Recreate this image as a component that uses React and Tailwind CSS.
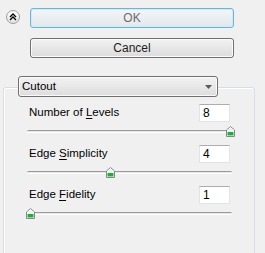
import React from 'react';

// Slider rows: value, thumb center (px from track start)
const ROWS = [
  { id: 'levels', before: 'Number of ', key: 'L', after: 'evels', value: '8', thumb: 203 },
  { id: 'simplicity', before: 'Edge ', key: 'S', after: 'implicity', value: '4', thumb: 83 },
  { id: 'fidelity', before: 'Edge ', key: 'F', after: 'idelity', value: '1', thumb: 3 },
];

const Thumb = ({ left }) => (
  <svg
    width="9"
    height="11"
    viewBox="0 0 9 11"
    className="absolute top-0"
    style={{ left: left - 4.5 }}
  >
    <path d="M4.5 0.5 L8.5 4 L8.5 10.5 L0.5 10.5 L0.5 4 Z" fill="#ffffff" stroke="#7d8a94" />
    <path d="M1.5 6 L7.5 6 L7.5 9.5 L1.5 9.5 Z" fill="#22b02c" />
    <path d="M4.5 2 L7 4.3 L7 6 L2 6 L2 4.3 Z" fill="#e9f1f4" />
  </svg>
);

const SliderRow = ({ row }) => (
  <div className="flex flex-col">
    <div className="flex items-center justify-between h-[18px] pl-[25px] pr-[24px]">
      <span className="text-[11.5px] text-black leading-none">
        {row.before}
        <span className="underline underline-offset-2">{row.key}</span>
        {row.after}
      </span>
      <div className="w-[31px] h-[18px] bg-white border border-[#e2e3ea] border-t-[#abadb3] flex items-center pl-[3px] text-[12px] text-black">
        {row.value}
      </div>
    </div>
    <div className="relative ml-[23px] w-[205px] h-[11px] mt-[4px]">
      <div className="absolute left-0 right-0 top-[4px] h-[3px] rounded-full border-t border-[#9a9a9a] bg-[#e7e7e7] border-b border-b-white" />
      <Thumb left={row.thumb} />
    </div>
  </div>
);

const App = () => {
  return (
    <div
      className="w-[265px] h-[253px] bg-[#f0f0f0] overflow-hidden"
      style={{ fontFamily: '"Liberation Sans", Arial, sans-serif' }}
    >
      {/* Top buttons */}
      <div className="flex items-start pt-[8px]">
        <div className="ml-[6px] mt-[2px] w-[14px] h-[14px] rounded-full border border-[#9c9c9c] bg-gradient-to-b from-white to-[#e2e2e2] flex items-center justify-center">
          <svg width="8" height="8" viewBox="0 0 8 8">
            <path d="M1 4 L4 1 L7 4 M1 7 L4 4 L7 7" fill="none" stroke="#000" strokeWidth="1.3" />
          </svg>
        </div>
        <button className="ml-[10px] w-[204px] h-[20px] rounded-[3px] border border-[#6fb4d8] bg-gradient-to-b from-[#f3f6f8] to-[#e3e8ec] shadow-[inset_0_0_0_1px_#c9eefb] text-[12px] text-[#6b6b6b]">
          OK
        </button>
      </div>
      <button className="ml-[30px] mt-[10px] w-[204px] h-[20px] rounded-[3px] border border-[#707070] bg-gradient-to-b from-[#f2f2f2] to-[#dcdcdc] shadow-[inset_0_0_0_1px_#fbfbfb] text-[12px] text-[#1e1e1e]">
        Cancel
      </button>

      {/* Group box */}
      <div className="mt-[17px] ml-[3px]">
        <div className="relative z-10 ml-[15px] w-[200px] h-[21px] rounded-[3px] border border-[#707070] bg-gradient-to-b from-[#f2f2f2] to-[#dddddd] shadow-[inset_0_0_0_1px_#fafafa] flex items-center justify-between pl-[3px] pr-[5px]">
          <span className="text-[11.5px] text-black">Cutout</span>
          <svg width="7" height="4" viewBox="0 0 7 4">
            <path d="M0 0 L7 0 L3.5 4 Z" fill="#5a5a5a" />
          </svg>
        </div>
        <div className="-mt-[10px] w-[252px] h-[200px] rounded-[3px] border border-[#d5dfe5] shadow-[inset_1px_1px_0_#ffffff] pt-[16px] flex flex-col gap-[8px]">
          {ROWS.map((row) => (
            <SliderRow key={row.id} row={row} />
          ))}
        </div>
      </div>
    </div>
  );
};

export default App;
